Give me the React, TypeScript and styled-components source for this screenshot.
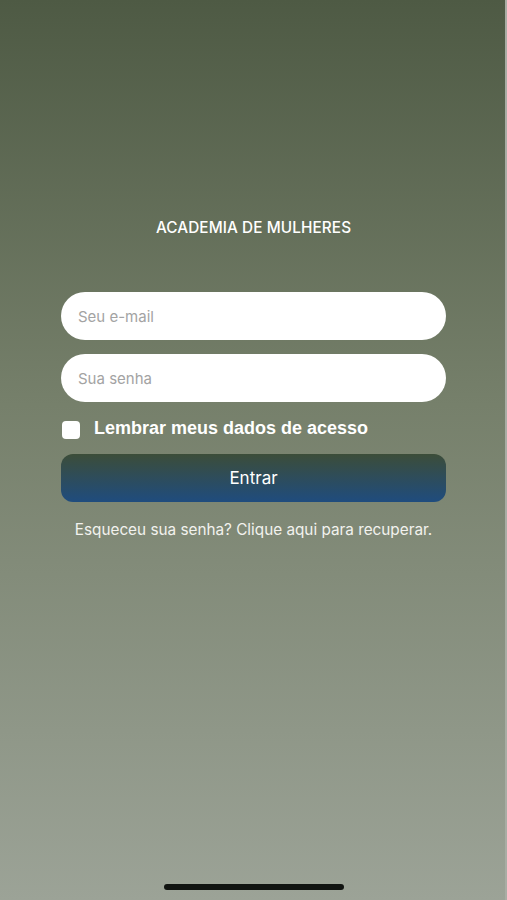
import { FC } from 'react';
import styled, { createGlobalStyle } from 'styled-components';

const GlobalStyle = createGlobalStyle`
  html, body {
    margin: 0;
    padding: 0;
  }
  body {
    font-family: Inter, "Noto Sans", "Liberation Sans", sans-serif;
  }
`;

const Screen = styled.div`
  box-sizing: border-box;
  width: 507px;
  height: 900px;
  display: flex;
  flex-direction: column;
  align-items: center;
  background: linear-gradient(180deg, #4e5a44 0%, #76806b 45%, #9ca397 100%);
  box-shadow: inset -2px 0 0 #a9ada4;
  position: relative;
`;

const Title = styled.h1`
  margin: 218px 0 0;
  font-size: 15.3px;
  line-height: 20px;
  font-weight: 500;
  color: #ffffff;
  letter-spacing: 0.1px;
`;

const Form = styled.form`
  width: 385px;
  margin-top: 54px;
  display: flex;
  flex-direction: column;
`;

const Input = styled.input`
  box-sizing: border-box;
  width: 100%;
  height: 48px;
  border: none;
  border-radius: 24px;
  background: #ffffff;
  padding: 0 17px;
  font-family: Inter, "Noto Sans", sans-serif;
  font-size: 15px;
  color: #333;
  outline: none;
  margin-bottom: 14px;

  &::placeholder {
    color: #a3a3a3;
  }
`;

const CheckRow = styled.label`
  display: flex;
  align-items: center;
  gap: 14px;
  margin-left: 1px;
  height: 24px;
`;

const Box = styled.span`
  width: 18px;
  height: 18px;
  border-radius: 4px;
  background: #ffffff;
  margin-top: 4px;
`;

const CheckText = styled.span`
  font-family: "Liberation Sans", Arial, sans-serif;
  font-size: 18px;
  font-weight: 700;
  color: #ffffff;
`;

const Button = styled.button`
  margin-top: 14px;
  height: 48px;
  border: none;
  border-radius: 12px;
  background: linear-gradient(180deg, #3c4d39 0%, #1f4c7e 100%);
  color: #ffffff;
  font-family: Inter, "Noto Sans", sans-serif;
  font-size: 17px;
  font-weight: 400;
  cursor: pointer;
`;

const Forgot = styled.p`
  margin: 18px 0 0;
  text-align: center;
  font-size: 15.3px;
  color: #f2f2ee;
`;

const HomeBar = styled.div`
  position: absolute;
  bottom: 10px;
  left: 164px;
  width: 180px;
  height: 6px;
  border-radius: 3px;
  background: #111411;
`;

const App: FC = () => {
  return (
    <>
      <GlobalStyle />
      <Screen>
        <Title>ACADEMIA DE MULHERES</Title>
        <Form onSubmit={(e) => e.preventDefault()}>
          <Input type='email' placeholder='Seu e-mail' />
          <Input type='password' placeholder='Sua senha' />
          <CheckRow>
            <Box />
            <CheckText>Lembrar meus dados de acesso</CheckText>
          </CheckRow>
          <Button type='submit'>Entrar</Button>
          <Forgot>Esqueceu sua senha? Clique aqui para recuperar.</Forgot>
        </Form>
        <HomeBar />
      </Screen>
    </>
  );
};

export default App;
